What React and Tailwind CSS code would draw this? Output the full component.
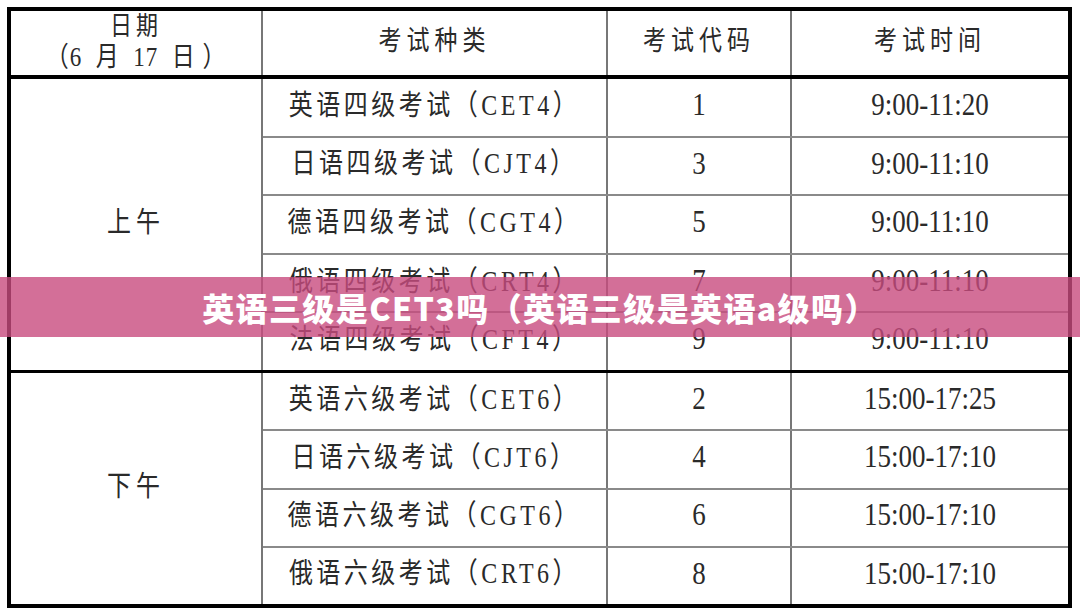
import React from "react";

const morning = [
  ["英语四级考试（CET4）", "1", "9:00-11:20"],
  ["日语四级考试（CJT4）", "3", "9:00-11:10"],
  ["德语四级考试（CGT4）", "5", "9:00-11:10"],
  ["俄语四级考试（CRT4）", "7", "9:00-11:10"],
  ["法语四级考试（CFT4）", "9", "9:00-11:10"],
];

const afternoon = [
  ["英语六级考试（CET6）", "2", "15:00-17:25"],
  ["日语六级考试（CJT6）", "4", "15:00-17:10"],
  ["德语六级考试（CGT6）", "6", "15:00-17:10"],
  ["俄语六级考试（CRT6）", "8", "15:00-17:10"],
];

const serif = "font-['Liberation_Serif','Noto_Sans_CJK_SC',serif]";

// text in the picture is stretched taller than it is wide
const Txt = ({ children, className = "" }) => (
  <span className={`inline-block whitespace-pre ${className}`}>{children}</span>
);

const Row = ({ row, last }) => (
  <div className={`flex flex-1 ${last ? "" : "border-b-2 border-[#8a8a8a]"}`}>
    <div className="w-[345px] border-r-2 border-[#777] flex items-center justify-center pb-[5px]">
      <Txt className="text-[24px] tracking-[3.5px] scale-y-[1.2]">{row[0]}</Txt>
    </div>
    <div className="w-[184px] border-r-2 border-[#777] flex items-center justify-center pb-[4px]">
      <Txt className="text-[27px] scale-y-[1.15]">{row[1]}</Txt>
    </div>
    <div className="flex-1 flex items-center justify-center pb-[4px]">
      <Txt className="text-[27px] scale-y-[1.15]">{row[2]}</Txt>
    </div>
  </div>
);

const Block = ({ label, rows, className }) => (
  <div className={`flex ${className}`}>
    <div className="w-[252px] border-r-2 border-[#777] flex items-center justify-center pb-[5px]">
      <Txt className="text-[24px] tracking-[5px] scale-y-[1.2]">{label}</Txt>
    </div>
    <div className="flex-1 flex flex-col">
      {rows.map((r, i) => (
        <Row key={r[1]} row={r} last={i === rows.length - 1} />
      ))}
    </div>
  </div>
);

export default function App() {
  return (
    <div className={`relative w-[1080px] h-[614px] bg-white overflow-hidden text-[#2a2a2a] ${serif}`}>
      <div className="pt-[7px] pl-[7px]">
        <div className="w-[1065px] h-[601px] border-4 border-black flex flex-col">
          {/* header */}
          <div className="h-[68px] flex border-b-4 border-black">
            <div className="w-[252px] border-r-2 border-[#777] flex flex-col items-center justify-center pb-[4px] leading-[31px]">
              <Txt className="text-[22px] tracking-[4px] scale-y-[1.2]">日期</Txt>
              <Txt className="text-[23px] tracking-[1px] scale-y-[1.2]">（6  月  17  日 ）</Txt>
            </div>
            <div className="w-[345px] border-r-2 border-[#777] flex items-center justify-center pb-[2px]">
              <Txt className="text-[23px] tracking-[5px] scale-y-[1.2]">考试种类</Txt>
            </div>
            <div className="w-[184px] border-r-2 border-[#777] flex items-center justify-center pb-[2px]">
              <Txt className="text-[23px] tracking-[5px] scale-y-[1.2]">考试代码</Txt>
            </div>
            <div className="flex-1 flex items-center justify-center pb-[2px]">
              <Txt className="text-[23px] tracking-[5px] scale-y-[1.2]">考试时间</Txt>
            </div>
          </div>

          <Block label="上午" rows={morning} className="h-[294px] border-b-[3px] border-black" />
          <Block label="下午" rows={afternoon} className="flex-1" />
        </div>
      </div>

      {/* title banner laid over the table */}
      <div className="absolute left-0 right-0 top-[277px] h-[60px] bg-[rgba(200,75,126,0.8)] flex items-center justify-center">
        <span className="text-white text-[32px] font-black tracking-[1.4px] font-['Noto_Sans_CJK_SC',sans-serif]">
          英语三级是CET3吗（英语三级是英语a级吗）
        </span>
      </div>
    </div>
  );
}
